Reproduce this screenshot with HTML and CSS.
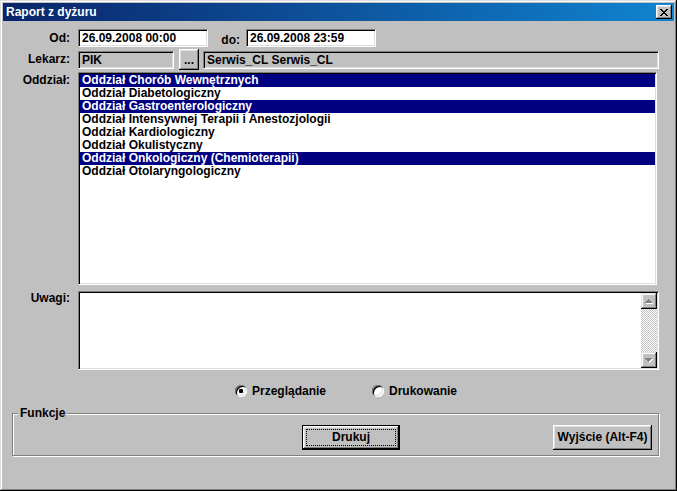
FILE: index.html
```html
<!DOCTYPE html>
<html lang="pl">
<head>
<meta charset="utf-8">
<title>Raport z dyżuru</title>
<link rel="stylesheet" href="styles.css">
</head>
<body>
<div class="window">
  <div class="titlebar">
    <span class="title">Raport z dyżuru</span>
    <button class="close" type="button" aria-label="Zamknij">
      <svg width="8" height="7" viewBox="0 0 8 7" shape-rendering="crispEdges"><path fill="#000" d="M0 0h2v1H0zM6 0h2v1H6zM1 1h2v1H1zM5 1h2v1H5zM2 2h4v1H2zM3 3h2v1H3zM2 4h4v1H2zM1 5h2v1H1zM5 5h2v1H5zM0 6h2v1H0zM6 6h2v1H6z"/></svg>
    </button>
  </div>
  <div class="content">
    <div class="row r1">
      <span class="lbl">Od:</span>
      <div class="field w130">26.09.2008 00:00</div>
      <span class="lbl2">do:</span>
      <div class="field w130">26.09.2008 23:59</div>
    </div>
    <div class="row r2">
      <span class="lbl">Lekarz:</span>
      <div class="field ro w96">PIK</div>
      <button class="btn dots" type="button">...</button>
      <div class="field ro wdoc">Serwis_CL Serwis_CL</div>
    </div>
    <div class="row r3">
      <span class="lbl top">Oddział:</span>
      <div class="listbox">
        <div class="item sel">Oddział Chorób Wewnętrznych</div>
        <div class="item">Oddział Diabetologiczny</div>
        <div class="item sel">Oddział Gastroenterologiczny</div>
        <div class="item">Oddział Intensywnej Terapii i Anestozjologii</div>
        <div class="item">Oddział Kardiologiczny</div>
        <div class="item">Oddział Okulistyczny</div>
        <div class="item sel">Oddział Onkologiczny (Chemioterapii)</div>
        <div class="item">Oddział Otolaryngologiczny</div>
      </div>
    </div>
    <div class="row r4">
      <span class="lbl top2">Uwagi:</span>
      <div class="memo">
        <div class="memo-text"></div>
        <div class="vscroll">
          <div class="sbtn">
            <svg width="8" height="5" viewBox="0 0 8 5" shape-rendering="crispEdges"><path fill="#fff" d="M4 1h1v1H4zM3 2h3v1H3zM2 3h5v1H2zM1 4h7v1H1z"/><path fill="#808080" d="M3 0h1v1H3zM2 1h3v1H2zM1 2h5v1H1zM0 3h7v1H0z"/></svg>
          </div>
          <div class="track"></div>
          <div class="sbtn">
            <svg width="8" height="5" viewBox="0 0 8 5" shape-rendering="crispEdges"><path fill="#fff" d="M1 1h7v1H1zM2 2h5v1H2zM3 3h3v1H3zM4 4h1v1H4z"/><path fill="#808080" d="M0 0h7v1H0zM1 1h5v1H1zM2 2h3v1H2zM3 3h1v1H3z"/></svg>
          </div>
        </div>
      </div>
    </div>
    <div class="radios">
      <span class="opt"><span class="radio checked"></span>Przeglądanie</span>
      <span class="opt"><span class="radio"></span>Drukowanie</span>
    </div>
    <div class="group">
      <span class="legend">Funkcje</span>
      <button class="btn push default" type="button">Drukuj</button>
      <button class="btn push exit" type="button">Wyjście (Alt-F4)</button>
    </div>
  </div>
</div>
</body>
</html>
```
FILE: styles.css
```css
* { box-sizing: border-box; }
html, body { margin: 0; padding: 0; }
body {
  width: 677px;
  height: 491px;
  overflow: hidden;
  background: #c0c0c0;
  color: #000;
  font: bold 12px "Liberation Sans", Arial, sans-serif;
}
.window {
  width: 677px;
  height: 491px;
  padding: 3px;
  background: #c0c0c0;
  box-shadow: inset -1px -1px 0 #000, inset 1px 1px 0 #dfdfdf, inset -2px -2px 0 #808080, inset 2px 2px 0 #fff;
  display: flex;
  flex-direction: column;
}
.titlebar {
  height: 18px;
  flex: none;
  display: flex;
  align-items: center;
  padding: 0 2px 0 3px;
  background: linear-gradient(to right, #0a246a, #1084d0);
}
.title {
  flex: 1;
  color: #fff;
  line-height: 18px;
  white-space: nowrap;
}
.close {
  width: 16px;
  height: 14px;
  padding: 0;
  border: none;
  background: #c0c0c0;
  display: flex;
  align-items: center;
  justify-content: center;
  box-shadow: inset -1px -1px 0 #000, inset 1px 1px 0 #fff, inset -2px -2px 0 #808080, inset 2px 2px 0 #dfdfdf;
}
.close svg { display: block; margin-top: 1px; }

.content {
  display: flex;
  flex-direction: column;
  padding-top: 8px;
}
.row { display: flex; align-items: center; }
.r1 { height: 18px; }
.r2 { height: 21px; margin-top: 2px; }
.r3 { margin-top: 2px; align-items: flex-start; }
.r4 { margin-top: 6px; align-items: flex-start; }

.lbl {
  width: 67px;
  margin-right: 8px;
  text-align: right;
  line-height: 13px;
  white-space: nowrap;
}
.lbl.top { margin-top: 2px; }
.lbl.top2 { margin-top: 1px; }
.lbl2 {
  width: 38px;
  padding-right: 6px;
  text-align: right;
  margin-top: 5px;
  line-height: 13px;
}

.field {
  height: 18px;
  padding: 0 3px;
  line-height: 16px;
  white-space: nowrap;
  overflow: hidden;
  background: #fff;
  border: 1px solid;
  border-color: #808080 #fff #fff #808080;
  box-shadow: inset 1px 1px 0 #000, inset -1px -1px 0 #dfdfdf;
}
.field.ro { background: #c0c0c0; }
.w130 { width: 130px; }
.w96 { width: 96px; }
.wdoc { width: 456px; }

.btn {
  font: inherit;
  color: #000;
  background: #c0c0c0;
  border: none;
  padding: 0;
  box-shadow: inset -1px -1px 0 #000, inset 1px 1px 0 #fff, inset -2px -2px 0 #808080, inset 2px 2px 0 #dfdfdf;
}
.dots {
  width: 20px;
  height: 21px;
  margin: 0 4px 0 5px;
  line-height: 19px;
  padding-top: 2px;
}

.listbox {
  width: 579px;
  height: 213px;
  padding: 1px;
  background: #fff;
  border: 1px solid;
  border-color: #808080 #fff #fff #808080;
  box-shadow: inset 1px 1px 0 #000, inset -1px -1px 0 #dfdfdf;
}
.item {
  height: 13px;
  line-height: 13px;
  padding-left: 2px;
  white-space: nowrap;
}
.item.sel { background: #000080; color: #fff; }

.memo {
  width: 581px;
  height: 79px;
  padding: 1px;
  display: flex;
  background: #fff;
  border: 1px solid;
  border-color: #808080 #fff #fff #808080;
  box-shadow: inset 1px 1px 0 #000, inset -1px -1px 0 #dfdfdf;
}
.memo-text { flex: 1; }
.vscroll {
  width: 16px;
  display: flex;
  flex-direction: column;
}
.sbtn {
  width: 16px;
  height: 16px;
  flex: none;
  display: flex;
  align-items: center;
  justify-content: center;
  background: #c0c0c0;
  box-shadow: inset -1px -1px 0 #000, inset 1px 1px 0 #dfdfdf, inset -2px -2px 0 #808080, inset 2px 2px 0 #fff;
}
.sbtn svg { display: block; }
.track {
  flex: 1;
  background: repeating-conic-gradient(#fff 0 25%, #c0c0c0 0 50%) 0 0 / 2px 2px;
}

.radios {
  height: 14px;
  margin-top: 14px;
  margin-left: 232px;
  display: flex;
  align-items: center;
  gap: 46px;
  line-height: 14px;
}
.opt { display: flex; align-items: center; gap: 5px; white-space: nowrap; }
.radio {
  width: 12px;
  height: 12px;
  border-radius: 50%;
  background: #fff;
  display: flex;
  align-items: center;
  justify-content: center;
  box-shadow: inset 1px 1px 0 #808080, inset -1px -1px 0 #fff, inset 2px 2px 0 #000, inset -2px -2px 0 #dfdfdf;
}
.radio.checked::after {
  content: "";
  width: 4px;
  height: 4px;
  border-radius: 1px;
  background: #000;
}

.group {
  position: relative;
  width: 647px;
  height: 43px;
  margin: 15px 0 0 9px;
  padding: 11px 6px 0 289px;
  display: flex;
  align-items: flex-start;
  border: 1px solid #808080;
  box-shadow: 1px 1px 0 #fff, inset 1px 1px 0 #fff;
}
.legend {
  position: absolute;
  top: -8px;
  left: 5px;
  padding: 0 2px;
  line-height: 14px;
  background: #c0c0c0;
}
.push { height: 25px; line-height: 23px; }
.default {
  position: relative;
  width: 98px;
  border: 1px solid #000;
  box-shadow: inset -1px -1px 0 #000, inset 1px 1px 0 #fff, inset -2px -2px 0 #808080, inset 2px 2px 0 #dfdfdf;
}
.default::before {
  content: "";
  position: absolute;
  inset: 3px;
  border: 1px dotted #000;
}
.exit {
  width: 99px;
  margin-left: auto;
}
```
